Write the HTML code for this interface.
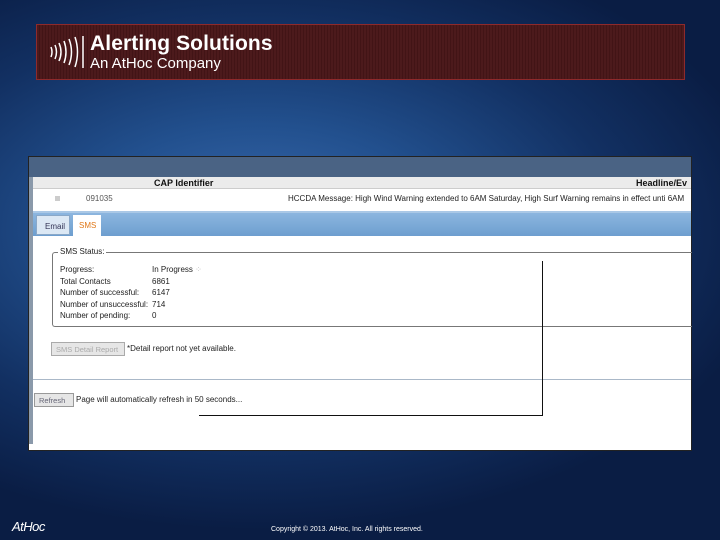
<!DOCTYPE html>
<html><head><meta charset="utf-8"><style>
*{margin:0;padding:0;box-sizing:border-box}
body{width:720px;height:540px;overflow:hidden;position:relative;font-family:"Liberation Sans",sans-serif;
background:radial-gradient(ellipse 520px 300px at 260px 230px,#3c6cb0 0%,#22508e 35%,#123062 70%,#0a1d44 100%);}
.abs{position:absolute}
.banner{left:36px;top:24px;width:649px;height:56px;background:repeating-linear-gradient(90deg,#4c1a1c 0 2px,#421416 2px 3px);border:1px solid #8e2a2c}
.t1{left:90px;top:32px;color:#fff;font-weight:bold;font-size:21px;letter-spacing:0.1px}
.t2{left:90px;top:55px;color:#fff;font-size:15px}
.frame{left:28px;top:156px;width:664px;height:295px;background:#fff;border:1px solid #222}
.txt{font-size:8px;color:#222}
</style></head><body>
<div class="abs banner"></div>
<svg class="abs" style="left:47px;top:34px" width="42" height="36" viewBox="0 0 42 36" fill="none" stroke="#fff" stroke-width="1.5">
<path d="M4 13 Q6 18 4 23"/><path d="M8 11 Q11 18 8 25"/><path d="M12 9 Q16 18 12 27"/><path d="M17 7 Q21 18 17 29"/><path d="M22 5 Q27 18 22 31"/><path d="M28 3 Q33 18 28 33"/><path d="M36 2 V34"/>
</svg>
<div class="abs t1">Alerting Solutions</div>
<div class="abs t2">An AtHoc Company</div>

<div class="abs frame">
  <div class="abs" style="left:0;top:0;width:662px;height:20px;background:#4a6384"></div>
  <div class="abs" style="left:4px;top:20px;width:658px;height:12px;background:#ebebeb;border-bottom:1px solid #ccc"></div>
  <div class="abs" style="left:125px;top:21px;font-size:9px;font-weight:bold;color:#111">CAP Identifier</div>
  <div class="abs" style="left:607px;top:21px;font-size:9px;font-weight:bold;color:#111;white-space:nowrap">Headline/Ev</div>
  <div class="abs" style="left:26px;top:39px;width:5px;height:5px;background:#ccc"></div>
  <div class="abs txt" style="left:57px;top:37px;color:#555">091035</div>
  <div class="abs txt" style="left:259px;top:37px;white-space:nowrap">HCCDA Message: High Wind Warning extended to 6AM Saturday, High Surf Warning remains in effect unti 6AM</div>
  <div class="abs" style="left:4px;top:54px;width:658px;height:25px;background:linear-gradient(#8cb6df,#6d9ecf);border-top:2px solid #aac8e6"></div>
  <div class="abs" style="left:7px;top:58px;width:34px;height:20px;background:#dce8f4;border:1px solid #8aa8c8;font-size:8px;color:#335;padding:6px 0 0 8px">Email</div>
  <div class="abs" style="left:44px;top:58px;width:28px;height:21px;background:#fff;font-size:8px;color:#e07818;padding:6px 0 0 6px">SMS</div>
  <div class="abs" style="left:4px;top:79px;width:658px;height:144px;border-bottom:1px solid #aab8c8"></div>
  <div class="abs" style="left:23px;top:95px;width:640px;height:75px;border:1px solid #777;border-right:none;border-radius:3px 0 0 3px"></div>
  <div class="abs txt" style="left:29px;top:90px;background:#fff;padding:0 2px">SMS Status:</div>
  <div class="abs txt" style="left:31px;top:107px;line-height:11.5px">Progress:<br>Total Contacts<br>Number of successful:<br>Number of unsuccessful:<br>Number of pending:</div>
  <div class="abs txt" style="left:123px;top:107px;line-height:11.5px">In Progress <span style="color:#bbb">⁘</span><br>6861<br>6147<br>714<br>0</div>
  <div class="abs" style="left:22px;top:185px;width:74px;height:14px;background:#e6e6e6;border:1px solid #aaa;font-size:7.5px;color:#aaa;padding:2px 0 0 4px;white-space:nowrap">SMS Detail Report</div>
  <div class="abs txt" style="left:98px;top:187px">*Detail report not yet available.</div>
  <div class="abs" style="left:5px;top:236px;width:40px;height:14px;background:#e6e6e6;border:1px solid #999;font-size:7.5px;color:#667;padding:2px 0 0 4px">Refresh</div>
  <div class="abs txt" style="left:47px;top:238px">Page will automatically refresh in 50 seconds...</div>
  <div class="abs" style="left:513px;top:104px;width:1px;height:155px;background:#111"></div>
  <div class="abs" style="left:170px;top:258px;width:344px;height:1px;background:#111"></div>
  <div class="abs" style="left:0;top:20px;width:4px;height:267px;background:#8a99aa"></div>
</div>

<div class="abs" style="left:12px;top:519px;color:#fff;font-size:13px;font-style:italic;letter-spacing:-0.5px">AtHoc</div>
<div class="abs" style="left:271px;top:526px;color:#fff;font-size:7px">Copyright © 2013. AtHoc, Inc. All rights reserved.</div>
</body></html>
